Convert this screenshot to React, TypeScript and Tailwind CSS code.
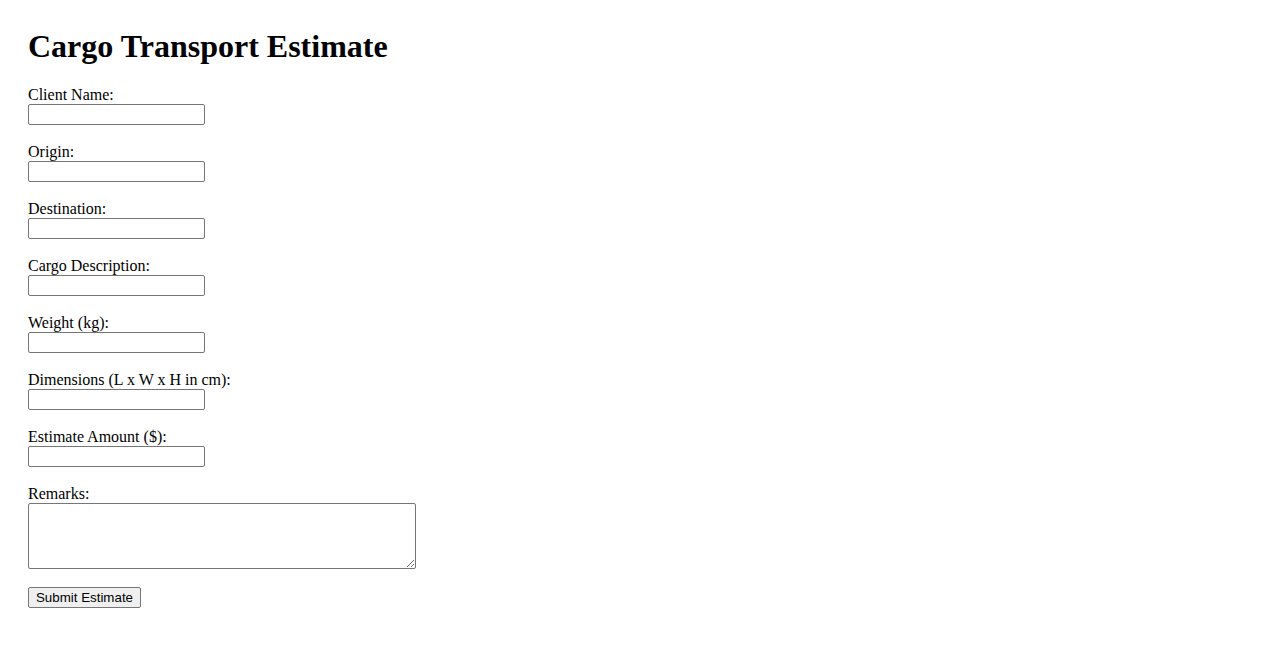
import React from "react";

const fields = [
  "Client Name:",
  "Origin:",
  "Destination:",
  "Cargo Description:",
  "Weight (kg):",
  "Dimensions (L x W x H in cm):",
  "Estimate Amount ($):",
];

export default function App() {
  return (
    <div
      className="min-h-[650px] bg-white pl-[28px] pt-[28px] text-black"
      style={{ fontFamily: '"Liberation Serif", "Times New Roman", serif' }}
    >
      <h1 className="mb-[21px] text-[32px] font-bold leading-[37px]">Cargo Transport Estimate</h1>
      <form className="flex flex-col items-start">
        {fields.map((f) => (
          <div key={f} className="mb-[18px] flex flex-col items-start">
            <label className="block h-[18px] text-[16px] leading-[18px]">{f}</label>
            <input
              type="text"
              className="box-border h-[21px] w-[177px] rounded-[2px] border border-[#767676] bg-white px-[2px] text-[13.33px] outline-none"
              style={{ fontFamily: '"Liberation Sans", Arial, sans-serif' }}
            />
          </div>
        ))}
        <div className="mb-[18px] flex flex-col items-start">
          <label className="block h-[18px] text-[16px] leading-[18px]">Remarks:</label>
          <textarea
            className="box-border block h-[66px] w-[388px] resize rounded-[2px] border border-[#767676] bg-white px-[2px] text-[13.33px] outline-none"
            style={{ fontFamily: '"Liberation Mono", monospace' }}
          />
        </div>
        <button
          type="button"
          className="box-border h-[21px] w-[113px] rounded-[2px] border border-[#767676] bg-[#efefef] px-[6px] text-[13.33px] leading-[15px] text-black"
          style={{ fontFamily: '"Liberation Sans", Arial, sans-serif' }}
        >
          Submit Estimate
        </button>
      </form>
    </div>
  );
}
